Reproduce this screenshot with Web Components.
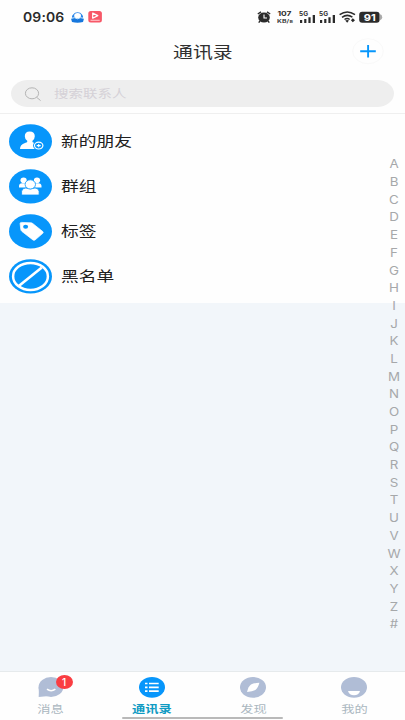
<!DOCTYPE html>
<html lang="zh-CN"><head><meta charset="utf-8"><title>通讯录</title>
<style>
html,body{margin:0;height:100%}
body{font-family:"Noto Sans","Noto Sans CJK SC",sans-serif;background:#f2f6fa;overflow:hidden}
</style></head><body>
<contacts-app></contacts-app>
<script>
const define=(name,html,setup)=>customElements.define(name,class extends HTMLElement{
  constructor(){super();this.attachShadow({mode:'open'}).innerHTML=typeof html==='function'?html(this):html;if(setup)setup(this)}
});

// Text set wider than its natural proportions.
define('wide-text',`<style>:host{display:inline-block;white-space:nowrap;line-height:1.4;transform:scaleX(var(--wide,1.25));transform-origin:var(--from,left) center}</style><slot></slot>`);

define('status-bar',`<style>
:host{display:flex;height:32px;align-items:center;padding:2px 22px 0 23px;box-sizing:border-box;color:#2b2b2b}
.time{font:600 13.4px/20px Inter,sans-serif;--wide:1.04;width:47px;letter-spacing:.15px}
.grow{flex:1}
svg{display:block;flex:none}
text{font-family:Inter,sans-serif;font-weight:700}
</style>
<wide-text class="time">09:06</wide-text>
<svg width="34" height="14" viewBox="0 0 34 14">
 <path d="M2.2 8.2A3 3 0 0 1 3.2 4.6A5 4.4 0 0 1 12 4.6A3 3 0 0 1 12.8 8.2Q7.5 12 2.2 8.2" fill="#2a86e8"/>
 <ellipse cx="7.6" cy="5.8" rx="3.4" ry="2.8" fill="#fff"/>
 <path d="M1 8.4Q4.5 6.6 7.5 9Q10.5 6.6 14 8.4L13 12Q7.5 13.4 2 12Z" fill="#1677dd"/><path d="M1 8.4Q4.5 6.8 7.5 8.8Q10.5 6.8 14 8.4" fill="none" stroke="#d8f0ff" stroke-width=".9"/>
 <rect x="18.3" y="1" width="13.6" height="11.6" rx="2.5" fill="#f75868"/>
 <path d="M22.7 3.1L27.8 5.6L22.7 8.2Z" fill="#f75868" stroke="#fff" stroke-width="1.2" stroke-linejoin="round"/><path d="M20.5 10.3H29.7" stroke="#ffc2c7" stroke-width="1.1"/>
</svg>
<span class="grow"></span>
<svg width="127" height="20" viewBox="256 7 127 20" fill="#2b2b2b">
 <ellipse cx="264" cy="17.6" rx="5.8" ry="5"/><path d="M257.8 14L261 11.8M270.2 14L267 11.8M260 21L258.7 22.6M268 21L269.3 22.6" stroke="#2b2b2b" stroke-width="1.4"/><path d="M264 14.6V18H267" fill="none" stroke="#fff" stroke-width="1.1"/>
 <text x="277.5" y="16.2" font-size="6.3" textLength="14" lengthAdjust="spacingAndGlyphs">107</text>
 <text x="277" y="23" font-size="5.2" textLength="16" lengthAdjust="spacingAndGlyphs" style="font-weight:600">KB/s</text>
 <text x="299" y="16.4" font-size="6" textLength="9" lengthAdjust="spacingAndGlyphs">5G</text>
 <path d="M300 20H302.2V23H300ZM304.2 19H306.4V23H304.2ZM308.4 17.2H310.6V23H308.4ZM312.7 15H315V23H312.7Z"/>
 <text x="319" y="16.4" font-size="6" textLength="9" lengthAdjust="spacingAndGlyphs">5G</text>
 <path d="M320 20H322.2V23H320ZM324.2 19H326.4V23H324.2ZM328.4 17.2H330.6V23H328.4ZM332.7 15H335V23H332.7Z"/>
 <path d="M339.6 14.7Q347.3 9.4 355 14.7M342 17.3Q347.3 13.5 352.4 17.2M344.5 19.5Q347.2 17.6 349.7 19.5" fill="none" stroke="#2b2b2b" stroke-width="1.5"/><path d="M345.2 20.6Q347.2 19.2 349 20.6L347.2 22.8ZM352.8 18.2L355 20.2L352.8 22.3L350.9 20.2Z"/>
 <rect x="359.2" y="11.8" width="20.4" height="11" rx="3"/><path d="M380 14.3Q382.2 14.5 382.2 17.2T380 20.3Z" fill="#aaa"/>
 <text x="363.8" y="20.7" font-size="9.4" fill="#fff" textLength="12" lengthAdjust="spacingAndGlyphs">91</text>
</svg>`);

define('title-bar',`<style>
:host{display:grid;grid-template-columns:75px 1fr 75px;height:40px;align-items:center;color:#303030}
wide-text{justify-self:center;font-size:15.9px;--from:center}
svg{justify-self:center;display:block}
</style><span></span><wide-text><slot></slot></wide-text>
<svg width="34" height="28" viewBox="0 0 34 28"><ellipse cx="17" cy="13.2" rx="15.3" ry="12.5" fill="none" stroke="#f9f9f9"/><path d="M9.2 13.3H24.8M17.1 7.1V19.5" stroke="#0796fb" stroke-width="1.9"/></svg>`);

define('search-box',`<style>
:host{display:block;padding:8px 11px 6px;border-bottom:1px solid #efefef}
div{height:27px;border-radius:17px/13.5px;background:#eee;display:flex;align-items:center;padding-left:13px;color:#d5d1d7}
svg{display:block;margin-right:12px}
wide-text{font-size:11.5px;--wide:1.26;padding-top:1px}
</style><div><svg width="18" height="16" viewBox="0 0 18 16" fill="none" stroke="#b4b4b4" stroke-width="1"><ellipse cx="8" cy="7.3" rx="6.6" ry="5.5"/><path d="M12.5 11.2L16.6 14.6"/></svg><wide-text><slot></slot></wide-text></div>`);

const glyphs={
friend:`<path d="M11 25Q11 20.7 16 19.1Q18.7 18.3 18.4 17Q15.8 15.2 15.8 12.2Q15.8 7.4 20.7 7.4Q25.8 7.4 25.8 12.2Q25.8 15 23.3 17Q23 18.5 25.4 19.1L30 21V25Z" fill="#fff"/><ellipse cx="29.7" cy="21.6" rx="5.7" ry="4.7" fill="#0796fb"/><ellipse cx="29.7" cy="21.6" rx="4.2" ry="3.4" fill="none" stroke="#fff" stroke-width="1.2"/><path d="M27.7 21.6H31.7M29.7 20V23.2" stroke="#fff" stroke-width="1.1"/>`,
group:`<g fill="#fff"><ellipse cx="14.6" cy="11.2" rx="3.1" ry="2.8"/><ellipse cx="28" cy="11.2" rx="3.1" ry="2.8"/><path d="M10 18.6V17Q10 14.4 13 14.2H17V18.6ZM25.5 18.6V14.2H29.3Q32.5 14.4 32.5 17V18.6Z"/><g stroke="#0796fb" stroke-width=".8"><path d="M12.6 26V22.4Q12.8 19.2 16.8 19Q21.3 20.6 26 19Q29.8 19.2 30.1 22.4V26Z"/><ellipse cx="21.3" cy="15.4" rx="5.2" ry="4.6"/></g></g>`,
tag:`<path d="M11.1 9.6Q11.1 8.4 12.6 8.4L22 8.8Q23 8.9 24 9.7L33.8 17.6Q34.7 18.4 33.8 19.3L26 26Q24.9 26.7 23.9 25.9L13 17.5Q12 16.7 11.8 15.6Z" fill="#fff" stroke="#fff" stroke-width=".7" stroke-linejoin="round"/><ellipse cx="16.6" cy="12.7" rx="2.5" ry="2" fill="#0796fb"/>`,
block:`<ellipse cx="21.5" cy="17.4" rx="17.4" ry="13.5" fill="none" stroke="#fff" stroke-width="2.5"/><path d="M9.8 27L32.8 8.4" stroke="#fff" stroke-width="2.6"/>`};
define('contact-row',el=>`<style>
:host{display:flex;height:45px;align-items:center;padding-left:9px;color:#202020}
svg{display:block;margin-right:9px}wide-text{font-size:14.2px;padding-bottom:1px}
</style><svg width="43" height="35" viewBox="0 0 43 35"><ellipse cx="21.5" cy="17.4" rx="21.5" ry="17.2" fill="#0796fb"/>${glyphs[el.getAttribute('icon')]}</svg><wide-text><slot></slot></wide-text>`);

define('letter-index',()=>`<style>
:host{display:flex;flex-direction:column;width:22px;color:#a6a8aa;font:400 11.6px Inter,sans-serif}
wide-text{height:17.7px;line-height:17.7px;text-align:center;--from:center;--wide:1.15}
</style>${[...'ABCDEFGHIJKLMNOPQRSTUVWXYZ#'].map(c=>`<wide-text>${c}</wide-text>`).join('')}`);

const tabs={
chat:`<ellipse cx="14" cy="11" rx="12.4" ry="9.9"/><path d="M1.6 11Q2 15 1.7 21L12 20Z"/><path d="M10 13.2Q14 16.4 18.4 13.2" fill="none" stroke="#fff" stroke-width="1.6"/>`,
list:`<ellipse cx="14" cy="11.3" rx="13" ry="10.4"/><path d="M7 7.5H9.5M11 7.5H20.7M7 11.3H9.5M11 11.3H20.7M7 15.1H9.5M11 15.1H20.7" stroke="#fff" stroke-width="1.7"/>`,
find:`<ellipse cx="14" cy="11.3" rx="13" ry="10.4"/><path d="M8 16.1Q9.3 10.3 12 8.5Q15 7 20.4 6.7Q19 12 16.4 14Q13.5 15.5 8 16.1Z" fill="#fff"/>`,
me:`<ellipse cx="14" cy="11.3" rx="13" ry="10.4"/><path d="M8 15H20Q18.6 19.3 14 19.3T8 15Z" fill="#fff"/>`};
define('tab-item',el=>`<style>
:host{position:relative;display:flex;flex-direction:column;align-items:center;padding-top:4px;color:#abb7c0;--ink:#b0bdd6}
:host([active]){color:#109bc3;--ink:#0796fb;font-weight:700}
svg{display:block;fill:var(--ink)}wide-text{font-size:10.6px;line-height:16px;margin-top:3px;--from:center}
b{position:absolute;left:calc(50% + 5px);top:3px;width:17px;height:14px;border-radius:50%;background:#fa3d42;color:#fff;font:500 10px/14px Inter,sans-serif;text-align:center}
</style><svg width="28" height="22" viewBox="0 0 28 22">${tabs[el.getAttribute('icon')]}</svg><wide-text><slot></slot></wide-text>${el.hasAttribute('badge')?`<b>${el.getAttribute('badge')}</b>`:''}`);

define('tab-bar',`<style>
:host{position:relative;display:grid;grid-template-columns:repeat(4,1fr);height:49px;box-sizing:border-box;border-top:1px solid #e6eaec;background:#fefefe}
i{position:absolute;left:122px;right:122px;bottom:1px;height:2px;border-radius:1px;background:#b9b9b9}
</style><slot></slot><i></i>`);

define('contacts-app',`<style>
:host{display:flex;flex-direction:column;width:405px;height:720px}
header,.rows{background:#fefefe}.rows{padding:5px 0 4px}
main{flex:1;position:relative}
letter-index{position:absolute;right:0;top:42.4px}
</style>
<header><status-bar></status-bar><title-bar>通讯录</title-bar><search-box>搜索联系人</search-box></header>
<main><div class="rows"><contact-row icon="friend">新的朋友</contact-row><contact-row icon="group">群组</contact-row><contact-row icon="tag">标签</contact-row><contact-row icon="block">黑名单</contact-row></div><letter-index></letter-index></main>
<tab-bar><tab-item icon="chat" badge="1">消息</tab-item><tab-item icon="list" active>通讯录</tab-item><tab-item icon="find">发现</tab-item><tab-item icon="me">我的</tab-item></tab-bar>`);
</script></body></html>
